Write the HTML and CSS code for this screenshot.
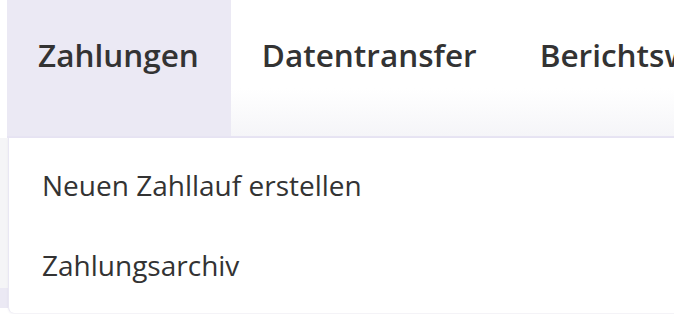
FILE: index.html
```html
<!DOCTYPE html>
<html lang="de">
<head>
<meta charset="utf-8">
<link rel="stylesheet" href="styles.css">
</head>
<body>
<div class="page">
  <nav class="topnav">
    <a class="tab tab-active">Zahlungen</a>
    <a class="tab">Datentransfer</a>
    <a class="tab">Berichtswesen</a>
  </nav>
  <div class="content">
    <div class="side">
      <div class="side-panel"></div>
      <div class="side-band"></div>
    </div>
  </div>
  <div class="dropdown">
    <a class="dd-item">Neuen Zahllauf erstellen</a>
    <a class="dd-item">Zahlungsarchiv</a>
  </div>
</div>
</body>
</html>
```

FILE: styles.css
```css
html, body {
  margin: 0;
  padding: 0;
  background: #ffffff;
  overflow: hidden;
}
.page {
  position: relative;
  width: 674px;
  height: 314px;
  overflow: hidden;
  font-family: "Open Sans", "Noto Sans", sans-serif;
  color: #333333;
}
.topnav {
  display: flex;
  height: 136px;
  margin-left: 7px;
  border-bottom: 2px solid #e7e4f3;
  background: linear-gradient(to bottom, #ffffff 0%, #ffffff 65%, #f5f5f8 100%);
  white-space: nowrap;
}
.tab {
  display: block;
  padding: 33px 32px 0 31px;
  font-size: 31.5px;
  font-weight: 600;
  line-height: 44px;
  color: #333333;
}
.tab-active {
  background: #ebe9f4;
}
.content {
  display: flex;
}
.side {
  width: 8px;
  display: flex;
  flex-direction: column;
}
.side-panel {
  height: 150px;
  background: #f5f5f7;
}
.side-band {
  height: 20px;
  background: #ebe9f4;
}
.dropdown {
  position: absolute;
  left: 8px;
  top: 138px;
  right: -20px;
  height: 175px;
  box-sizing: border-box;
  padding-top: 7px;
  background: #ffffff;
  border-left: 1px solid #e9e7f3;
  border-bottom-left-radius: 6px;
  box-shadow: 0 1px 2px rgba(60, 50, 120, 0.08);
}
.dd-item {
  display: block;
  padding: 21px 0 21px 33px;
  font-size: 28px;
  font-weight: 400;
  line-height: 38px;
  color: #333333;
}
```
